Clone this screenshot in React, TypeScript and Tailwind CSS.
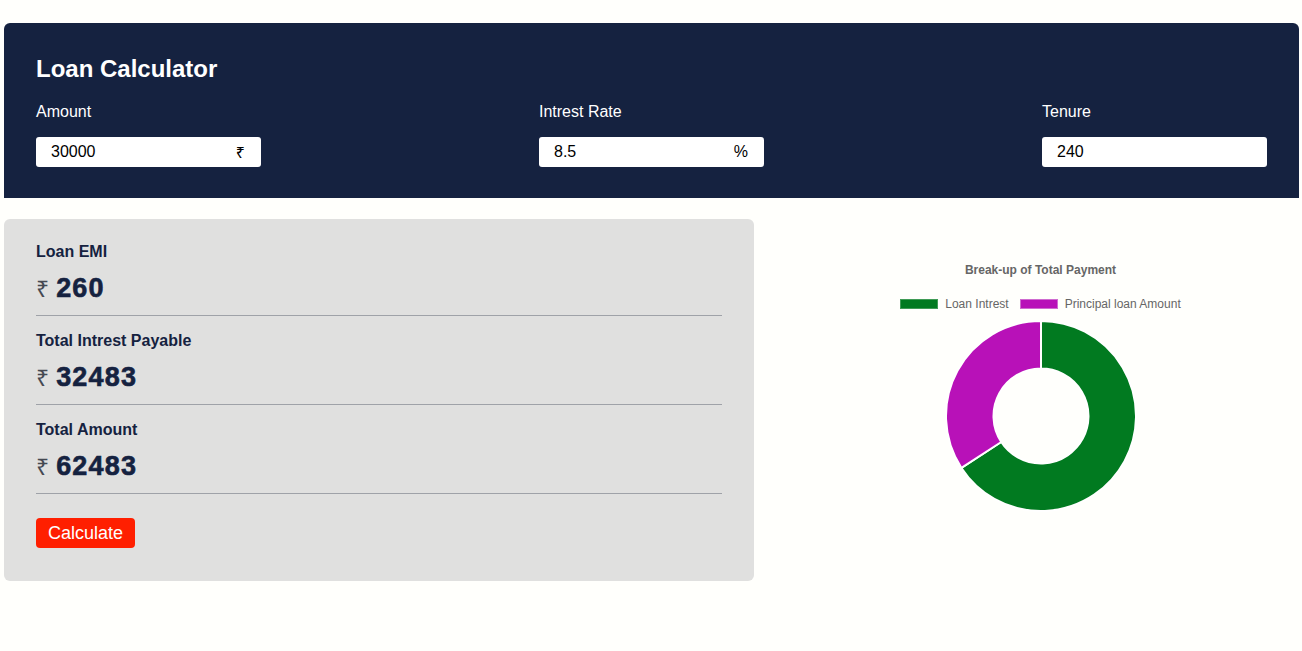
import React from "react";

const F = { fontFamily: '"Liberation Sans", "Noto Sans", "DejaVu Sans", sans-serif' };

function Field({ label, value, suffix }: { label: string; value: string; suffix?: string }) {
  return (
    <div className="flex flex-col">
      <div className="h-6 text-[16px] leading-6 text-white">{label}</div>
      <div className="mt-[13px] flex h-[30px] w-[225px] items-center justify-between rounded-[3px] bg-white pl-[15px] pr-[16px] text-[16px] text-black">
        <span>{value}</span>
        {suffix && (
          <span style={suffix === "₹" ? { fontFamily: '"Noto Sans", "DejaVu Sans", sans-serif' } : undefined}>{suffix}</span>
        )}
      </div>
    </div>
  );
}

function Stat({ label, value }: { label: string; value: string }) {
  return (
    <div className="flex flex-col">
      <div className="h-6 text-[16px] font-bold leading-6 text-[#152240]">{label}</div>
      <div className="mt-[6px] flex h-9 items-center">
        <span className="text-[23px] text-[#454952]" style={{ fontFamily: '"Noto Sans", "DejaVu Sans", sans-serif' }}>₹</span>
        <span className="ml-[7px] text-[27px] font-bold tracking-[1.2px] text-[#152240] [-webkit-text-stroke:0.6px_#152240]">{value}</span>
      </div>
      <div className="mt-[9px] h-px bg-[#9fa2a8]" />
    </div>
  );
}

function Donut() {
  const a = 62483;
  const b = 32483;
  const frac = a / (a + b);
  const R = 95;
  const r = 47.5;
  const c = 95;
  const th = frac * 2 * Math.PI;
  const pt = (rad: number, t: number) => [c + rad * Math.sin(t), c - rad * Math.cos(t)];
  const [ox, oy] = pt(R, th);
  const [ix, iy] = pt(r, th);
  const green = `M ${c} ${c - R} A ${R} ${R} 0 1 1 ${ox} ${oy} L ${ix} ${iy} A ${r} ${r} 0 1 0 ${c} ${c - r} Z`;
  const purple = `M ${ox} ${oy} A ${R} ${R} 0 0 1 ${c} ${c - R} L ${c} ${c - r} A ${r} ${r} 0 0 0 ${ix} ${iy} Z`;
  return (
    <svg width="192" height="192" viewBox="-1 -1 192 192">
      <path d={green} fill="#017a20" stroke="#ffffff" strokeWidth="2" strokeLinejoin="round" />
      <path d={purple} fill="#b811b8" stroke="#ffffff" strokeWidth="2" strokeLinejoin="round" />
    </svg>
  );
}

export default function App() {
  return (
    <div className="min-h-[651px] w-full bg-[#fffffc] pt-[23px] pl-1 pr-[3px]" style={F}>
      <div className="rounded-t-[6px] bg-[#152240] px-8 pt-[30px] pb-[31px]">
        <h1 className="text-[24px] font-bold leading-8 text-white">Loan Calculator</h1>
        <div className="mt-[15px] flex justify-between">
          <Field label="Amount" value="30000" suffix="₹" />
          <Field label="Intrest Rate" value="8.5" suffix="%" />
          <Field label="Tenure" value="240" />
        </div>
      </div>
      <div className="mt-[21px] flex">
        <div className="w-[750px] rounded-[6px] bg-[#e0e0df] px-8 pt-[21px] pb-[33px]">
          <div className="flex flex-col gap-[13px]">
            <Stat label="Loan EMI" value="260" />
            <Stat label="Total Intrest Payable" value="32483" />
            <Stat label="Total Amount" value="62483" />
          </div>
          <button className="mt-[24px] h-[30px] rounded-[4px] bg-[#ff1f00] px-3 text-[18px] leading-[30px] text-white">
            Calculate
          </button>
        </div>
        <div className="flex flex-1 flex-col items-center pl-[28px] pt-[43px]">
          <div className="h-4 text-[12px] font-bold leading-4 text-[#666666]">Break-up of Total Payment</div>
          <div className="mt-[18px] flex h-4 items-center text-[12px] leading-4 text-[#666666]">
            <span className="h-[10px] w-[38px] border border-[#3f9b55] bg-[#017a20]" />
            <span className="ml-[7px]">Loan Intrest</span>
            <span className="ml-[11px] h-[10px] w-[38px] border border-[#cf6bd0] bg-[#b811b8]" />
            <span className="ml-[7px]">Principal loan Amount</span>
          </div>
          <div className="mt-[8px]">
            <Donut />
          </div>
        </div>
      </div>
    </div>
  );
}
